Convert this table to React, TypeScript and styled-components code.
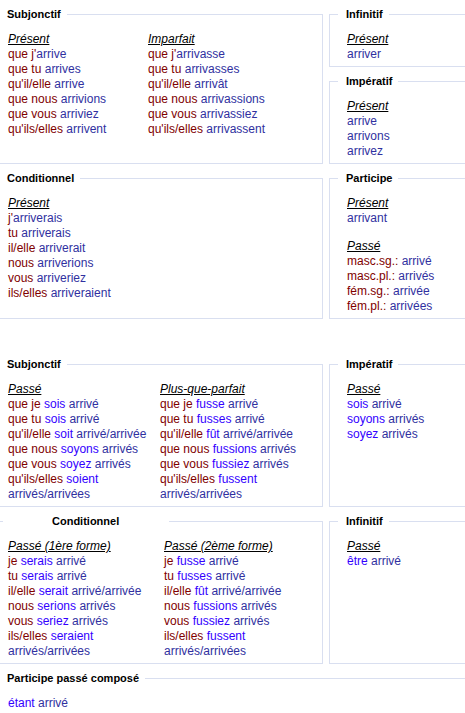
import styled, { createGlobalStyle } from 'styled-components';

type Kind = 'p' | 'a' | 'v';
type Seg = [Kind, string];
type Line = Seg[];

const Global = createGlobalStyle`
  html, body {
    margin: 0;
    overflow: hidden;
    background: #fff;
  }
  body {
    padding-top: 8px;
    font-family: "Liberation Sans", Arial, sans-serif;
    font-size: 12px;
  }
`;

const Page = styled.div`
  margin-left: -10px;
`;

const Section = styled.div<{ $top?: number }>`
  display: grid;
  grid-template-columns: 333px 200px;
  column-gap: 6px;
  row-gap: 8px;
  margin-top: ${({ $top }) => $top ?? 0}px;
`;

const Stack = styled.div`
  display: flex;
  flex-direction: column;
  gap: 8px;
`;

const Box = styled.fieldset<{ $full?: boolean }>`
  margin: 0;
  min-width: 0;
  padding: 11px 8px 4px 17px;
  border: 1px solid #d9dff0;
  grid-column: ${({ $full }) => ($full ? '1 / -1' : 'auto')};
`;

const Legend = styled.legend<{ $wide?: boolean }>`
  font-family: "Liberation Sans", Arial, sans-serif;
  font-size: 11px;
  font-weight: bold;
  line-height: 13px;
  color: #000;
  text-align: left;
  padding: ${({ $wide }) => ($wide ? '0 50px 0 49px' : '0 6px 0 8px')};
  margin-left: ${({ $wide }) => ($wide ? '-5px' : '-9px')};
`;

const Columns = styled.div<{ $col: number }>`
  display: grid;
  grid-template-columns: ${({ $col }) => $col}px 1fr;
`;

const Tense = styled.div<{ $gap?: boolean }>`
  line-height: 15px;
  margin-top: ${({ $gap }) => ($gap ? '13px' : '0')};
`;

const Title = styled.div`
  font-style: italic;
  text-decoration: underline;
  color: #000;
`;

const Row = styled.div``;

const Part = styled.span<{ $k: Kind }>`
  color: ${({ $k }) => ($k === 'p' ? '#800000' : $k === 'a' ? '#3300ff' : '#3030a0')};
`;

function TenseBlock({ title, lines, gap }: { title?: string; lines: Line[]; gap?: boolean }) {
  return (
    <Tense $gap={gap}>
      {title && <Title>{title}</Title>}
      {lines.map((l, i) => (
        <Row key={i}>
          {l.map(([k, t], j) => (
            <Part key={j} $k={k}>
              {t}
            </Part>
          ))}
        </Row>
      ))}
    </Tense>
  );
}

const simple = (p: string[], v: string[]): Line[] =>
  p.map((x, i) => (x ? [['p', x], ['v', v[i]]] : [['v', v[i]]]));

const compound = (p: string[], a: string[], v: string[]): Line[] =>
  p.map((x, i) => {
    const l: Line = [];
    if (x) l.push(['p', x]);
    l.push(['a', a[i] + ' ']);
    l.push(['v', v[i]]);
    return l;
  });

const subjP = ["que j'", 'que tu ', "qu'il/elle ", 'que nous ', 'que vous ', "qu'ils/elles "];
const subjC = ['que je ', 'que tu ', "qu'il/elle ", 'que nous ', 'que vous ', "qu'ils/elles "];
const condP = ["j'", 'tu ', 'il/elle ', 'nous ', 'vous ', 'ils/elles '];
const condC = ['je ', 'tu ', 'il/elle ', 'nous ', 'vous ', 'ils/elles '];
const pp = ['arrivé', 'arrivé', 'arrivé/arrivée', 'arrivés', 'arrivés', 'arrivés/arrivées'];

export default function App() {
  return (
    <Page>
      <Global />
      <Section>
        <Box>
          <Legend>Subjonctif</Legend>
          <Columns $col={140}>
            <TenseBlock
              title="Présent"
              lines={simple(subjP, ['arrive', 'arrives', 'arrive', 'arrivions', 'arriviez', 'arrivent'])}
            />
            <TenseBlock
              title="Imparfait"
              lines={simple(subjP, ['arrivasse', 'arrivasses', 'arrivât', 'arrivassions', 'arrivassiez', 'arrivassent'])}
            />
          </Columns>
        </Box>
        <Stack>
          <Box>
            <Legend>Infinitif</Legend>
            <TenseBlock title="Présent" lines={[[['v', 'arriver']]]} />
          </Box>
          <Box>
            <Legend>Impératif</Legend>
            <TenseBlock title="Présent" lines={[[['v', 'arrive']], [['v', 'arrivons']], [['v', 'arrivez']]]} />
          </Box>
        </Stack>
        <Box>
          <Legend>Conditionnel</Legend>
          <TenseBlock
            title="Présent"
            lines={simple(condP, ['arriverais', 'arriverais', 'arriverait', 'arriverions', 'arriveriez', 'arriveraient'])}
          />
        </Box>
        <Box>
          <Legend>Participe</Legend>
          <TenseBlock title="Présent" lines={[[['v', 'arrivant']]]} />
          <TenseBlock
            gap
            title="Passé"
            lines={simple(['masc.sg.: ', 'masc.pl.: ', 'fém.sg.: ', 'fém.pl.: '], ['arrivé', 'arrivés', 'arrivée', 'arrivées'])}
          />
        </Box>
      </Section>

      <Section $top={39}>
        <Box>
          <Legend>Subjonctif</Legend>
          <Columns $col={152}>
            <TenseBlock
              title="Passé"
              lines={compound(subjC, ['sois', 'sois', 'soit', 'soyons', 'soyez', 'soient'], pp)}
            />
            <TenseBlock
              title="Plus-que-parfait"
              lines={compound(subjC, ['fusse', 'fusses', 'fût', 'fussions', 'fussiez', 'fussent'], pp)}
            />
          </Columns>
        </Box>
        <Box>
          <Legend>Impératif</Legend>
          <TenseBlock
            title="Passé"
            lines={compound(['', '', ''], ['sois', 'soyons', 'soyez'], ['arrivé', 'arrivés', 'arrivés'])}
          />
        </Box>
        <Box>
          <Legend $wide>Conditionnel</Legend>
          <Columns $col={156}>
            <TenseBlock
              title="Passé (1ère forme)"
              lines={compound(condC, ['serais', 'serais', 'serait', 'serions', 'seriez', 'seraient'], pp)}
            />
            <TenseBlock
              title="Passé (2ème forme)"
              lines={compound(condC, ['fusse', 'fusses', 'fût', 'fussions', 'fussiez', 'fussent'], pp)}
            />
          </Columns>
        </Box>
        <Box>
          <Legend>Infinitif</Legend>
          <TenseBlock title="Passé" lines={compound([''], ['être'], ['arrivé'])} />
        </Box>
        <Box $full>
          <Legend>Participe passé composé</Legend>
          <TenseBlock lines={compound([''], ['étant'], ['arrivé'])} />
        </Box>
      </Section>
    </Page>
  );
}
